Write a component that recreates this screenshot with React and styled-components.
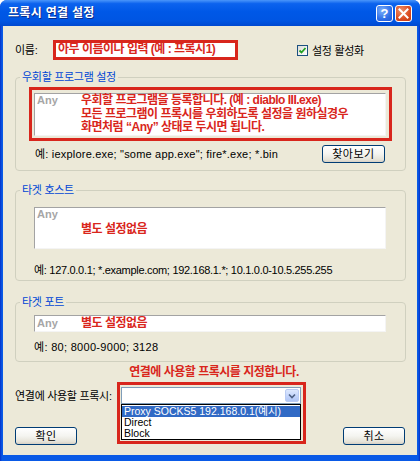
import React from 'react';
import styled, { createGlobalStyle } from 'styled-components';

const KR = `"Liberation Sans", "Noto Sans CJK KR", sans-serif`;

const GlobalStyle = createGlobalStyle`
  html, body { margin: 0; padding: 0; background: #ffffff; }
  body { font-family: ${KR}; font-size: 11px; color: #000; }
  * { box-sizing: border-box; }
`;

const Window = styled.div`
  width: 420px;
  height: 461px;
  display: flex;
  flex-direction: column;
  background: linear-gradient(to right, #0630C8 0, #0A5AE6 2px, #0A5AE6 calc(100% - 2px), #0630C8 100%);
  border-radius: 7px 7px 0 0;
  overflow: hidden;
`;

const TitleBar = styled.div`
  height: 26px;
  flex: none;
  display: flex;
  align-items: center;
  padding: 0 8px;
  background: linear-gradient(#4A96FA 0%, #0C63EE 14%, #0058E7 45%, #0055E2 80%, #0049D0 100%);
`;

const Title = styled.div`
  flex: 1;
  color: #ffffff;
  font-weight: bold;
  font-size: 12px;
  letter-spacing: 0.3px;
  line-height: 14px;
  text-shadow: 1px 1px 0 #0A2A8A;
`;

const CaptionButton = styled.div`
  width: 17px;
  height: 17px;
  margin-left: 2px;
  border: 1px solid #ffffff;
  border-radius: 3px;
  display: flex;
  align-items: center;
  justify-content: center;
  color: #ffffff;
  font-weight: bold;
  font-size: 13px;
  line-height: 1;
  background: ${p => (p.$close
    ? 'radial-gradient(circle at 35% 30%, #F0906A, #DA4A20 60%, #C03A12)'
    : 'radial-gradient(circle at 35% 30%, #7CB0FA, #2F6FE8 60%, #1F57D6)')};
`;

const Client = styled.div`
  flex: 1;
  margin: 0 3px 6px;
  background: #ECE9D8;
  display: flex;
  flex-direction: column;
  padding: 14px 11px 0 12px;
`;

const NameRow = styled.div`
  height: 20px;
  display: flex;
  align-items: center;
`;

const Label = styled.div`
  width: ${p => p.$w}px;
  flex: none;
  font-size: 11px;
  letter-spacing: -0.3px;
  line-height: 14px;
  white-space: nowrap;
`;

const NameBox = styled.div`
  width: 185px;
  height: 20px;
  border: 3px solid #D8261C;
  background: #ffffff;
  display: flex;
  align-items: center;
  padding-left: 2px;
`;

const RedText = styled.div`
  color: #D9261C;
  font-weight: bold;
  font-size: 12px;
  letter-spacing: -0.5px;
  line-height: 13.5px;
  white-space: nowrap;
  padding-top: ${p => p.$top || 0}px;
`;

const CheckWrap = styled.label`
  margin-left: 59px;
  display: flex;
  align-items: center;
  gap: 4px;
  font-size: 11px;
  letter-spacing: -0.3px;
`;

const CheckBox = styled.span`
  width: 11px;
  height: 11px;
  border: 1px solid #1C5180;
  background: linear-gradient(135deg, #DCDCD7, #FFFFFF);
  display: flex;
  align-items: center;
  justify-content: center;
`;

const Group = styled.fieldset`
  margin: ${p => p.$top}px 0 0;
  padding: 0;
  border: 1px solid #D0D0BF;
  border-radius: 4px;
  min-width: 0;
`;

const Legend = styled.legend`
  margin-left: 4px;
  padding: 0 2px;
  color: #0046D5;
  font-size: 11px;
  line-height: 14px;
  letter-spacing: -0.3px;
`;

const GroupBody = styled.div`
  padding: ${p => p.$pad};
  display: flex;
  flex-direction: column;
`;

const AnnotBox = styled.div`
  border: 3px solid #D8261C;
  padding: 3px 3px 2px 2px;
`;

const ListBox = styled.div`
  height: ${p => p.$h}px;
  background: #ffffff;
  border: 1px solid;
  border-color: #A3A3A3 #F4F4F4 #F4F4F4 #A3A3A3;
  display: flex;
  align-items: ${p => (p.$center ? 'center' : 'flex-start')};
  padding-left: 2px;
`;

const AnyText = styled.div`
  width: 44px;
  flex: none;
  color: #A6A6A6;
  font-weight: bold;
  font-size: 11px;
  line-height: 13.5px;
`;

const ExampleRow = styled.div`
  height: 18px;
  margin-top: ${p => p.$top || 0}px;
  display: flex;
  align-items: center;
  justify-content: space-between;
  padding: 0 7px 0 ${p => p.$left || 0}px;
`;

const Example = styled.div`
  margin-top: ${p => p.$top || 0}px;
  font-size: 11px;
  letter-spacing: ${p => p.$ls ?? 0}px;
  line-height: 14px;
  white-space: nowrap;
`;

const Button = styled.button`
  width: ${p => p.$w}px;
  height: 18px;
  padding: 0;
  border: 1px solid #003C74;
  border-radius: 3px;
  background: linear-gradient(#FFFFFF 0%, #F4F4F0 50%, #E6E3D8 85%, #D6D0C5 100%);
  font-family: ${KR};
  font-size: 11px;
  letter-spacing: 0.5px;
  color: #000;
  line-height: 14px;
`;

const Note = styled.div`
  margin-top: 3px;
  padding-left: 7px;
  text-align: center;
  color: #D9261C;
  font-weight: bold;
  font-size: 12px;
  letter-spacing: -0.5px;
  line-height: 14px;
`;

const ProxyRow = styled.div`
  margin-top: 8px;
  height: 17px;
  display: flex;
  align-items: center;
`;

const ComboWrap = styled.div`
  position: relative;
  width: 180px;
  height: 17px;
`;

const ComboField = styled.div`
  height: 100%;
  border: 1px solid #7F9DB9;
  background: #ffffff;
  display: flex;
  justify-content: flex-end;
  padding: 1px;
`;

const ComboArrow = styled.div`
  width: 14px;
  height: 100%;
  border: 1px solid #B9CBF3;
  border-radius: 2px;
  background: linear-gradient(#DDE8FE, #C1D3FB 60%, #AFC5F5);
  display: flex;
  align-items: center;
  justify-content: center;
`;

const DropList = styled.div`
  position: absolute;
  top: 17px;
  left: 0;
  right: 0;
  border: 1px solid #000000;
  background: #ffffff;
  padding-top: 1px;
  z-index: 2;
`;

const ListItem = styled.div`
  height: 11px;
  line-height: 11px;
  padding-left: 2px;
  font-size: 10.5px;
  white-space: nowrap;
  background: ${p => (p.$sel ? '#316AC5' : 'transparent')};
  color: ${p => (p.$sel ? '#ffffff' : '#000000')};
`;

const Annotation = styled.div`
  position: absolute;
  top: -5px;
  left: -4px;
  width: 189px;
  height: 62px;
  border: 3px solid #D8261C;
  pointer-events: none;
  z-index: 3;
`;

const ButtonRow = styled.div`
  margin-top: 23px;
  padding-right: 1px;
  display: flex;
  justify-content: space-between;
`;

export default function App() {
  return (
    <>
      <GlobalStyle />
      <Window>
        <TitleBar>
          <Title>프록시 연결 설정</Title>
          <CaptionButton>?</CaptionButton>
          <CaptionButton $close>
            <svg width="11" height="11" viewBox="0 0 11 11">
              <path d="M1.5 1.5 L9.5 9.5 M9.5 1.5 L1.5 9.5" stroke="#fff" strokeWidth="2" strokeLinecap="square" />
            </svg>
          </CaptionButton>
        </TitleBar>
        <Client>
          <NameRow>
            <Label $w={38}>이름:</Label>
            <NameBox>
              <RedText>아무 이름이나 입력 (예 : 프록시1)</RedText>
            </NameBox>
            <CheckWrap>
              <CheckBox>
                <svg width="9" height="9" viewBox="0 0 9 9">
                  <path d="M1.5 4.5 L3.5 6.5 L7.5 2" stroke="#21A121" strokeWidth="1.8" fill="none" />
                </svg>
              </CheckBox>
              설정 활성화
            </CheckWrap>
          </NameRow>

          <Group $top={10}>
            <Legend>우회할 프로그램 설정</Legend>
            <GroupBody $pad="3px 13px 7px 13px">
              <AnnotBox>
                <ListBox $h={43}>
                  <AnyText>Any</AnyText>
                  <RedText>
                    우회할 프로그램을 등록합니다. (예 : diablo III.exe)<br />
                    모든 프로그램이 프록시를 우회하도록 설정을 원하실경우<br />
                    화면처럼 “Any” 상태로 두시면 됩니다.
                  </RedText>
                </ListBox>
              </AnnotBox>
              <ExampleRow $top={4} $left={6}>
                <Example $ls={0.2}>예: iexplore.exe; "some app.exe"; fire*.exe; *.bin</Example>
                <Button $w={63}>찾아보기</Button>
              </ExampleRow>
            </GroupBody>
          </Group>

          <Group $top={12}>
            <Legend>타겟 호스트</Legend>
            <GroupBody $pad="10px 19px 3px 18px">
              <ListBox $h={42}>
                <AnyText>Any</AnyText>
                <RedText $top={15}>별도 설정없음</RedText>
              </ListBox>
              <Example $top={14} $ls={-0.3}>예: 127.0.0.1; *.example.com; 192.168.1.*; 10.1.0.0-10.5.255.255</Example>
            </GroupBody>
          </Group>

          <Group $top={14}>
            <Legend>타겟 포트</Legend>
            <GroupBody $pad="6px 19px 7px 18px">
              <ListBox $h={17} $center>
                <AnyText>Any</AnyText>
                <RedText>별도 설정없음</RedText>
              </ListBox>
              <Example $top={8} $ls={0.3}>예: 80; 8000-9000; 3128</Example>
            </GroupBody>
          </Group>

          <Note>연결에 사용할 프록시를 지정합니다.</Note>

          <ProxyRow>
            <Label $w={106}>연결에 사용할 프록시:</Label>
            <ComboWrap>
              <ComboField>
                <ComboArrow>
                  <svg width="8" height="6" viewBox="0 0 8 6">
                    <path d="M1 1.5 L4 4.5 L7 1.5" stroke="#4D6185" strokeWidth="1.6" fill="none" />
                  </svg>
                </ComboArrow>
              </ComboField>
              <DropList>
                <ListItem $sel>Proxy SOCKS5 192.168.0.1(예시)</ListItem>
                <ListItem>Direct</ListItem>
                <ListItem>Block</ListItem>
              </DropList>
              <Annotation />
            </ComboWrap>
          </ProxyRow>

          <ButtonRow>
            <Button $w={62}>확인</Button>
            <Button $w={62}>취소</Button>
          </ButtonRow>
        </Client>
      </Window>
    </>
  );
}
